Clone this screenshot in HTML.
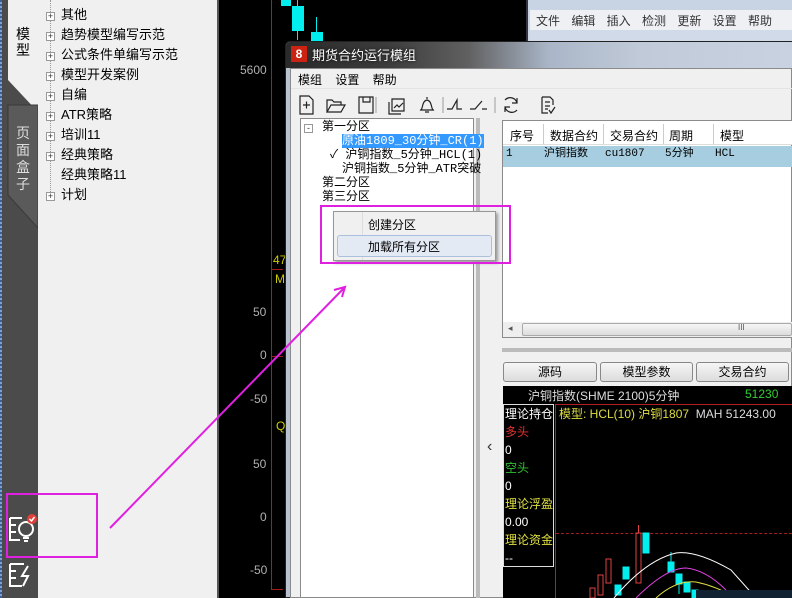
<!DOCTYPE html>
<html><head><meta charset="utf-8"><style>
*{margin:0;padding:0;box-sizing:border-box}
body{width:792px;height:598px;overflow:hidden;position:relative;background:#000;font-family:"Liberation Sans","Noto Sans CJK SC",sans-serif;font-size:12px;color:#000}
.a{position:absolute}
.t{white-space:nowrap}
.g{color:#b0b0b0;font-size:12px}
.pb{display:inline-block;width:9px;height:9px;border:1px solid #999;font-size:9px;line-height:7px;text-align:center;background:#fff;margin-right:6px;color:#333}
</style></head><body>
<!-- left strip -->
<div class="a" style="left:0;top:0;width:38px;height:598px;background:#4b4b4b"></div>
<div class="a" style="left:0;top:0;width:2px;height:598px;background:repeating-linear-gradient(#3a5f9a 0 2px,#7fa0d0 2px 4px)"></div>
<svg class="a" style="left:0;top:0" width="40" height="240"><polygon points="8,0 38,0 38,112 8,80" fill="#f0f0f0"/><polygon points="8,105 38,105 38,228 8,195" fill="#5a5a5a" stroke="#3a3a3a"/></svg>
<div class="a t" style="left:16px;top:26px;width:16px;font-size:14px;line-height:16px;white-space:normal">模型</div>
<div class="a t" style="left:16px;top:125px;width:16px;font-size:14px;line-height:17px;color:#ddd;white-space:normal">页面盒子</div>
<svg class="a" style="left:6px;top:512px" width="32" height="80"><g fill="none" stroke="#fff" stroke-width="2"><path d="M4 6h12M4 6v22h10M4 13h6M4 20h6"/><circle cx="20" cy="17" r="7"/><path d="M17 26h6M18 29h4"/><path d="M4 52h14M4 52v22h12M4 59h6M4 66h6M22 54l-6 10h6l-5 10"/></g><circle cx="26" cy="7" r="5" fill="#e0403a"/><path d="M23.5 7l2 2 3-4" stroke="#fff" stroke-width="1.5" fill="none"/></svg>
<!-- tree panel -->
<div class="a" style="left:38px;top:0;width:179px;height:598px;background:#f0f0f0"></div>
<div class="a" style="left:50px;top:0;width:1px;height:196px;border-left:1px dotted #999"></div>
<div class="a" style="left:46px;top:5px;font-size:13px;line-height:20px">
<div class="t"><span class="pb">+</span>其他</div>
<div class="t"><span class="pb">+</span>趋势模型编写示范</div>
<div class="t"><span class="pb">+</span>公式条件单编写示范</div>
<div class="t"><span class="pb">+</span>模型开发案例</div>
<div class="t"><span class="pb">+</span>自编</div>
<div class="t"><span class="pb">+</span>ATR策略</div>
<div class="t"><span class="pb">+</span>培训11</div>
<div class="t"><span class="pb">+</span>经典策略</div>
<div class="t"><span style="display:inline-block;width:9px;margin-right:6px"></span>经典策略11</div>
<div class="t"><span class="pb">+</span>计划</div>
</div>
<!-- left chart -->
<div class="a" style="left:217px;top:0;width:2px;height:598px;background:#555"></div>
<div class="a" style="left:271px;top:0;width:1px;height:590px;background:#a02020"></div>
<div class="a" style="left:271px;top:356px;width:12px;height:1px;background:#a02020"></div>
<div class="a" style="left:271px;top:589px;width:12px;height:1px;background:#a02020"></div>
<div class="a" style="left:271px;top:269px;width:12px;height:1px;background:#a02020"></div>
<div class="a" style="left:281px;top:0;width:10px;height:6px;background:#0ee"></div>
<div class="a" style="left:292px;top:6px;width:12px;height:25px;background:#0ee"></div>
<div class="a" style="left:297px;top:0;width:1px;height:40px;background:#0ee"></div>
<div class="a" style="left:311px;top:32px;width:12px;height:9px;background:#0ee"></div>
<div class="a" style="left:316px;top:17px;width:1px;height:20px;background:#0ee"></div>
<div class="a g" style="left:240px;top:63px">5600</div>
<div class="a g" style="left:253px;top:305px">50</div>
<div class="a g" style="left:260px;top:348px">0</div>
<div class="a g" style="left:250px;top:392px">-50</div>
<div class="a g" style="left:253px;top:457px">50</div>
<div class="a g" style="left:260px;top:510px">0</div>
<div class="a g" style="left:250px;top:563px">-50</div>
<div class="a" style="left:273px;top:253px;color:#cc0;font-size:12px">47</div>
<div class="a" style="left:275px;top:272px;color:#cc0;font-size:12px">M</div>
<div class="a" style="left:276px;top:419px;color:#cc0;font-size:12px">Q</div>
<!-- bg window top right -->
<div class="a" style="left:526px;top:0;width:266px;height:42px;background:#c8d4e4;border-left:2px solid #334"></div>
<div class="a t" style="left:530px;top:10px;width:262px;height:20px;background:#eef0f4;color:#333;font-size:12px;padding:2px 6px;word-spacing:8px">文件 编辑 插入 检测 更新 设置 帮助</div>
<div class="a" style="left:530px;top:30px;width:262px;height:12px;background:#d0dae8"></div>
<!-- dialog -->
<div class="a" style="left:285px;top:41px;width:507px;height:557px;background:#b8c2d0;border-radius:5px 0 0 0;border:1px solid #222"></div>
<div class="a" style="left:286px;top:42px;width:506px;height:26px;border-radius:4px 0 0 0;background:linear-gradient(90deg,#2a2a2a 0,#3c3c3c 20%,#606060 36%,#aab6c8 52%,#c0cad8 70%,#c8d2e0 100%)"></div>
<div class="a t" style="left:291px;top:46px;width:16px;height:16px;background:#c21;color:#fff;font-size:12px;font-weight:bold;line-height:16px;text-align:center">8</div>
<div class="a t" style="left:312px;top:45px;color:#fff;font-size:13px;text-shadow:0 0 3px #000">期货合约运行模组</div>
<div class="a" style="left:290px;top:68px;width:502px;height:530px;background:#f0f0f0;border:1px solid #8a8a8a"></div>
<div class="a t" style="left:298px;top:71px;font-size:12px;word-spacing:10px">模组 设置 帮助</div>
<div class="a" style="left:291px;top:88px;width:501px;height:1px;background:#e4e4e4"></div>
<svg class="a" style="left:296px;top:93px" width="270" height="24" fill="none" stroke="#222" stroke-width="1.2">
<path d="M4 3h9l4 4v14H4zM7 12h7M10.5 8.5v7"/>
<path d="M31 19V7h5l2 2h7v3M31 19l4-7h14l-4 7z"/>
<path d="M63 4h14v16H63zM67 4v5h7V4"/>
<path d="M80 4v16" stroke="#aaa"/>
<path d="M96 6h12v12H96zM93 9v12h12M98 15l3-3 2 2 4-4"/>
<path d="M131 4v2M125 17c2-2 1-9 6-10 5 1 4 8 6 10zM124 17h14M129 19h4"/>
<path d="M147 4v16" stroke="#aaa"/>
<path d="M151 16h5l5-9h0v9h5"/>
<path d="M174 16h5l7-8h0M186 16h5"/>
<path d="M199 4v16" stroke="#aaa"/>
<path d="M209 7a7 7 0 0 1 12 3M221 5v5h-5M221 17a7 7 0 0 1-12-3M209 19v-5h5"/>
<path d="M246 4h8l3 3v5M246 4v16h6M249 9h5M249 13h5M249 16h3M253 17l2 3 4-6"/>
</svg>
<!-- tree box -->
<div class="a" style="left:300px;top:118px;width:174px;height:480px;background:#fff;border:1px solid #8a8a8a"></div>
<div class="a" style="left:476px;top:118px;width:4px;height:480px;background:#bbb"></div>
<div class="a" style="left:304px;top:124px;width:9px;height:9px;border:1px solid #999;font-size:9px;line-height:6px;text-align:center;color:#333">-</div>
<div class="a t" style="left:322px;top:120px;font-family:'Liberation Mono','Noto Sans CJK SC',monospace;font-size:12px;line-height:14px">
<div>第一分区</div>
<div style="margin-left:20px"><span style="background:#3399ff;color:#fff">原油1809_30分钟_CR(1)</span></div>
<div style="margin-left:8px">✓ 沪铜指数_5分钟_HCL(1)</div>
<div style="margin-left:20px">沪铜指数_5分钟_ATR突破</div>
<div>第二分区</div>
<div>第三分区</div>
</div>
<!-- right list -->
<div class="a" style="left:502px;top:120px;width:290px;height:218px;background:#fff;border:1px solid #8a8a8a"></div>
<div class="a" style="left:503px;top:121px;width:289px;height:24px;background:#fff;border-bottom:1px solid #ddd"></div>
<div class="a t" style="left:510px;top:127px">序号</div>
<div class="a" style="left:543px;top:124px;width:1px;height:20px;background:#ccc"></div>
<div class="a t" style="left:550px;top:127px">数据合约</div>
<div class="a" style="left:603px;top:124px;width:1px;height:20px;background:#ccc"></div>
<div class="a t" style="left:610px;top:127px">交易合约</div>
<div class="a" style="left:663px;top:124px;width:1px;height:20px;background:#ccc"></div>
<div class="a t" style="left:669px;top:127px">周期</div>
<div class="a" style="left:713px;top:124px;width:1px;height:20px;background:#ccc"></div>
<div class="a t" style="left:720px;top:127px">模型</div>
<div class="a t" style="left:503px;top:146px;width:289px;height:21px;background:#a6cde0;font-family:'Liberation Mono','Noto Sans CJK SC',monospace;font-size:11px;line-height:16px"><span class="a" style="left:3px">1</span><span class="a" style="left:41px">沪铜指数</span><span class="a" style="left:102px">cu1807</span><span class="a" style="left:162px">5分钟</span><span class="a" style="left:212px">HCL</span></div>
<div class="a" style="left:503px;top:322px;width:289px;height:15px;background:#eee"></div>
<div class="a" style="left:522px;top:323px;width:270px;height:13px;background:linear-gradient(#f6f6f6,#dcdcdc);border:1px solid #aaa;border-radius:2px"></div>
<div class="a" style="left:508px;top:323px;font-size:9px;color:#555">◂</div>
<div class="a" style="left:738px;top:323px;font-size:8px;color:#555">III</div>
<div class="a" style="left:502px;top:348px;width:290px;height:4px;background:#bbb"></div>
<!-- context menu (above list) -->
<div class="a" style="left:333px;top:211px;width:163px;height:50px;background:#f0f0f0;border:1px solid #979797;box-shadow:2px 2px 3px #999"></div>
<div class="a" style="left:362px;top:212px;width:1px;height:48px;background:#ddd"></div>
<div class="a" style="left:337px;top:235px;width:155px;height:22px;background:#e4eaf4;border:1px solid #aac0dc;border-radius:3px"></div>
<div class="a t" style="left:368px;top:216px">创建分区</div>
<div class="a t" style="left:368px;top:238px">加载所有分区</div>
<div class="a" style="left:320px;top:205px;width:191px;height:59px;border:2px solid #e020e0"></div>
<!-- buttons -->
<div class="a t" style="left:503px;top:362px;width:94px;height:20px;background:linear-gradient(#f6f6f6,#dcdcdc);border:1px solid #888;border-radius:3px;text-align:center;line-height:18px">源码</div>
<div class="a t" style="left:600px;top:362px;width:93px;height:20px;background:linear-gradient(#f6f6f6,#dcdcdc);border:1px solid #888;border-radius:3px;text-align:center;line-height:18px">模型参数</div>
<div class="a t" style="left:696px;top:362px;width:93px;height:20px;background:linear-gradient(#f6f6f6,#dcdcdc);border:1px solid #888;border-radius:3px;text-align:center;line-height:18px">交易合约</div>
<div class="a" style="left:487px;top:438px;font-size:16px;color:#333">‹</div>
<!-- bottom chart -->
<div class="a" style="left:503px;top:386px;width:289px;height:212px;background:#000"></div>
<div class="a t" style="left:528px;top:387px;color:#ddd;font-size:12px">沪铜指数(SHME 2100)5分钟</div>
<div class="a t" style="left:745px;top:387px;color:#3c3;font-size:12px">51230</div>
<div class="a" style="left:555px;top:404px;width:237px;height:1px;background:#b02020"></div>
<div class="a" style="left:555px;top:404px;width:1px;height:194px;background:#b02020"></div>
<div class="a" style="left:503px;top:404px;width:51px;height:163px;border:1px solid #ddd"></div>
<div class="a t" style="left:505px;top:405px;font-size:12px;line-height:18px;color:#fff">
<div>理论持仓</div><div style="color:#e03030">多头</div><div>0</div><div style="color:#30c030">空头</div><div>0</div><div style="color:#e0e040">理论浮盈</div><div>0.00</div><div style="color:#e0e040">理论资金</div><div>--</div></div>
<div class="a t" style="left:559px;top:405px;color:#dd4;font-size:12px">模型: HCL(10) 沪铜1807 <span style="color:#ddd">&nbsp;MAH 51243.00</span></div>
<div class="a" style="left:556px;top:533px;width:236px;height:0;border-top:1px dashed #a02020"></div>
<svg class="a" style="left:556px;top:520px" width="236" height="78">
<g stroke="#e04040" fill="none"><rect x="80" y="13" width="5" height="50"/><path d="M82.5 5v8"/><rect x="50" y="39" width="5" height="24"/><rect x="42" y="55" width="5" height="20"/><rect x="34" y="68" width="5" height="10"/></g>
<g fill="#0ee" stroke="#0ee"><rect x="87" y="13" width="6" height="20"/><rect x="67" y="47" width="6" height="12"/><rect x="59" y="65" width="6" height="10"/><rect x="112" y="42" width="6" height="10"/><rect x="120" y="54" width="6" height="10"/><rect x="128" y="62" width="6" height="10"/><rect x="136" y="70" width="6" height="8"/><path d="M115 32v10M123 64v10"/></g>
<path d="M58 78Q90 40 120 33Q140 30 175 50L200 78" stroke="#fff" fill="none"/>
<path d="M80 78Q110 48 130 48Q150 50 170 70" stroke="#e040e0" fill="none"/>
<path d="M100 78Q120 60 140 62Q160 66 180 78" stroke="#dd4" fill="none"/>
<rect x="140" y="70" width="96" height="8" fill="#123"/>
</svg>
<!-- annotations -->
<div class="a" style="left:6px;top:493px;width:92px;height:65px;border:2px solid #e020e0"></div>
<svg class="a" style="left:0;top:0" width="792" height="598"><path d="M110 528L345 287M334 290l11-3-3 10" stroke="#e020e0" stroke-width="2" fill="none"/></svg>
</body></html>
